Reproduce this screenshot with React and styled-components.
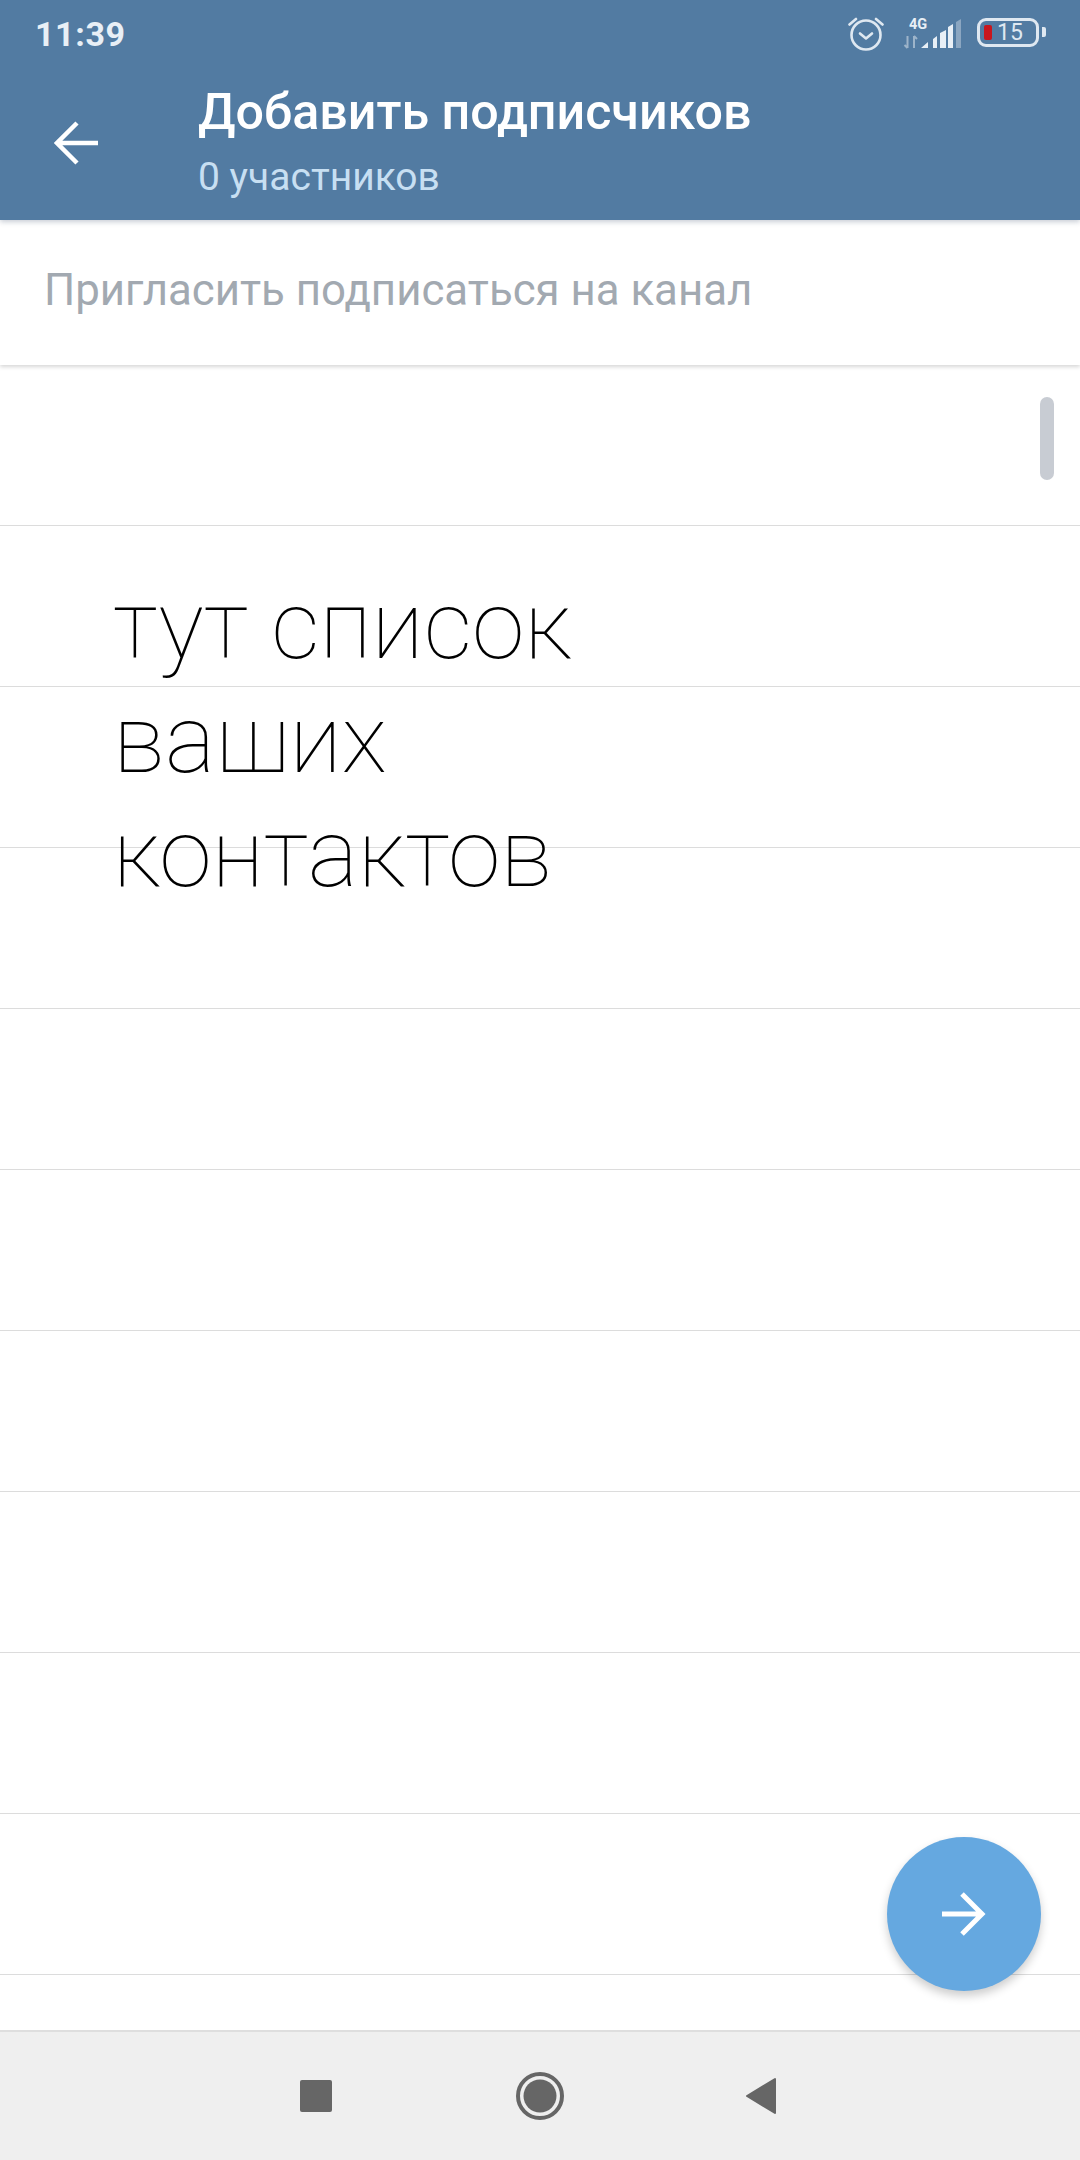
import React from "react";
import styled, { createGlobalStyle } from "styled-components";

const GlobalStyle = createGlobalStyle`
  html, body {
    margin: 0;
    padding: 0;
    background: #fff;
    font-family: Roboto, "Noto Sans", sans-serif;
  }
`;

const Screen = styled.div`
  position: relative;
  display: flex;
  flex-direction: column;
  width: 1080px;
  height: 2160px;
  overflow: hidden;
`;

const Header = styled.header`
  position: relative;
  z-index: 3;
  height: 220px;
  flex-shrink: 0;
  background: #527ba2;
  box-shadow: 0 2px 5px rgba(40, 60, 90, 0.25);
`;

const StatusBar = styled.div`
  display: flex;
  align-items: center;
  justify-content: space-between;
  height: 68px;
  padding: 0 35px 0 35px;
`;

const Time = styled.span`
  font-size: 34px;
  font-weight: 700;
  letter-spacing: 0.6px;
  color: #e8eff6;
`;

const StatusIcons = styled.div`
  display: flex;
  align-items: center;
  gap: 16px;
  margin-bottom: 3px;

  svg:first-child {
    margin-right: 3px;
  }
`;

const Battery = styled.div`
  position: relative;
  display: flex;
  align-items: center;
  gap: 5px;
  width: 62px;
  height: 29px;
  margin-right: 6px;
  padding-left: 4px;
  box-sizing: border-box;
  border: 3.5px solid #dfe8f1;
  border-radius: 9px;

  &::after {
    content: "";
    position: absolute;
    right: -10px;
    top: 6px;
    width: 4px;
    height: 10px;
    border-radius: 0 2px 2px 0;
    background: #dfe8f1;
  }
`;

const BatteryLevel = styled.span`
  width: 8px;
  height: 15px;
  border-radius: 2px;
  background: #c8161d;
`;

const BatteryText = styled.span`
  font-size: 23px;
  line-height: 22px;
  color: #dfe8f1;
`;

const Toolbar = styled.div`
  display: flex;
  align-items: center;
  height: 152px;
`;

const BackButton = styled.div`
  display: flex;
  width: 198px;
  padding: 0 0 2px 54px;
  box-sizing: border-box;
`;

const TitleBlock = styled.div`
  display: flex;
  flex-direction: column;
  margin-top: -6px;
`;

const Title = styled.span`
  font-size: 50.2px;
  font-weight: 500;
  line-height: 58px;
  color: #fff;
`;

const Subtitle = styled.span`
  font-size: 39px;
  line-height: 46px;
  margin-top: 13px;
  color: #c7dff2;
`;

const SearchBar = styled.div`
  position: relative;
  z-index: 2;
  display: flex;
  align-items: center;
  flex-shrink: 0;
  height: 145px;
  padding: 0 0 6px 44px;
  box-sizing: border-box;
  background: #fff;
  box-shadow: 0 2px 4px rgba(0, 0, 0, 0.16);
`;

const Placeholder = styled.span`
  font-size: 43.8px;
  color: #a2a9b1;
`;

const List = styled.main`
  position: relative;
  flex: 1;
  overflow: hidden;
  background: #fff;
`;

const Row = styled.div`
  height: ${(p) => p.$height}px;
  box-sizing: border-box;
  border-bottom: 1px solid #dcdcdc;
`;

const ScrollThumb = styled.div`
  position: absolute;
  top: 32px;
  right: 26px;
  width: 14px;
  height: 83px;
  border-radius: 7px;
  background: #c8ccd3;
`;

const Note = styled.p`
  position: absolute;
  top: 204px;
  left: 113px;
  margin: 0;
  font-size: 95.2px;
  font-weight: 100;
  line-height: 114px;
  color: #000;
`;

const Fab = styled.div`
  position: absolute;
  right: 39px;
  bottom: 39px;
  display: flex;
  align-items: center;
  justify-content: center;
  width: 154px;
  height: 154px;
  border-radius: 50%;
  background: #65a8e0;
  box-shadow: 0 5px 10px rgba(0, 0, 0, 0.2);
`;

const NavBar = styled.nav`
  display: flex;
  align-items: center;
  flex-shrink: 0;
  height: 130px;
  padding-left: 300px;
  box-sizing: border-box;
  gap: 181px;
  background: #efefef;
  border-top: 2px solid #dedede;
`;

const NavSquare = styled.div`
  width: 32px;
  height: 32px;
  margin-right: 3px;
  border-radius: 2px;
  background: #666;
`;

const rows = [161, 161, 161, 161, 161, 161, 161, 161, 161, 161, 60];

const AlarmIcon = () => (
  <svg width="36" height="36" viewBox="0 0 36 36" fill="none" stroke="#dfe8f1" strokeWidth="2.6" strokeLinecap="round" strokeLinejoin="round">
    <circle cx="18" cy="20" r="14.500" />
    <path d="M12 18.500l6 5 6-5" />
    <path d="M1.500 9.500L8 4M34.500 9.500L28 4" />
  </svg>
);

const SignalIcon = () => (
  <svg width="58" height="32" viewBox="0 0 58 32">
    <text x="6" y="12" fontFamily="Roboto, sans-serif" fontSize="14.500" fontWeight="700" fill="#e8eff6">4G</text>
    <path d="M4.500 19v12M4.500 31l-3-3M11 31V19M11 19l3 3" stroke="#9db4ca" strokeWidth="2" fill="none" />
    <path d="M18 31l7-6v6zM30 22l4-3v12h-4zM37 16l6-3v18h-6zM45 10l5-3v24h-5z" fill="#e8eff6" />
    <path d="M53 5l5-3v29h-5z" fill="#8ba6c1" />
  </svg>
);

const BackArrow = () => (
  <svg width="44" height="44" viewBox="0 0 44 44" fill="none" stroke="#fff" strokeWidth="4.500">
    <path d="M44 22H4M23 2L3 22l20 20" />
  </svg>
);

const NextArrow = () => (
  <svg width="44" height="44" viewBox="0 0 44 44" fill="none" stroke="#fff" strokeWidth="5">
    <path d="M0 22h40M20 2l20 20-20 20" />
  </svg>
);

const HomeIcon = () => (
  <svg width="48" height="50" viewBox="0 0 48 50">
    <circle cx="24" cy="25" r="22" fill="none" stroke="#666" strokeWidth="4" />
    <circle cx="24" cy="25" r="16.500" fill="#666" />
  </svg>
);

const BackTriangle = () => (
  <svg width="32" height="38" viewBox="0 0 32 38">
    <path d="M30 2v34L2 19z" fill="#666" stroke="#666" strokeWidth="2" strokeLinejoin="round" />
  </svg>
);

export default function App() {
  return (
    <Screen>
      <GlobalStyle />
      <Header>
        <StatusBar>
          <Time>11:39</Time>
          <StatusIcons>
            <AlarmIcon />
            <SignalIcon />
            <Battery>
              <BatteryLevel />
              <BatteryText>15</BatteryText>
            </Battery>
          </StatusIcons>
        </StatusBar>
        <Toolbar>
          <BackButton>
            <BackArrow />
          </BackButton>
          <TitleBlock>
            <Title>Добавить подписчиков</Title>
            <Subtitle>0 участников</Subtitle>
          </TitleBlock>
        </Toolbar>
      </Header>
      <SearchBar>
        <Placeholder>Пригласить подписаться на канал</Placeholder>
      </SearchBar>
      <List>
        {rows.map((h, i) => (
          <Row key={i} $height={h} />
        ))}
        <ScrollThumb />
        <Note>
          тут список
          <br />
          ваших
          <br />
          контактов
        </Note>
        <Fab>
          <NextArrow />
        </Fab>
      </List>
      <NavBar>
        <NavSquare />
        <HomeIcon />
        <BackTriangle />
      </NavBar>
    </Screen>
  );
}
